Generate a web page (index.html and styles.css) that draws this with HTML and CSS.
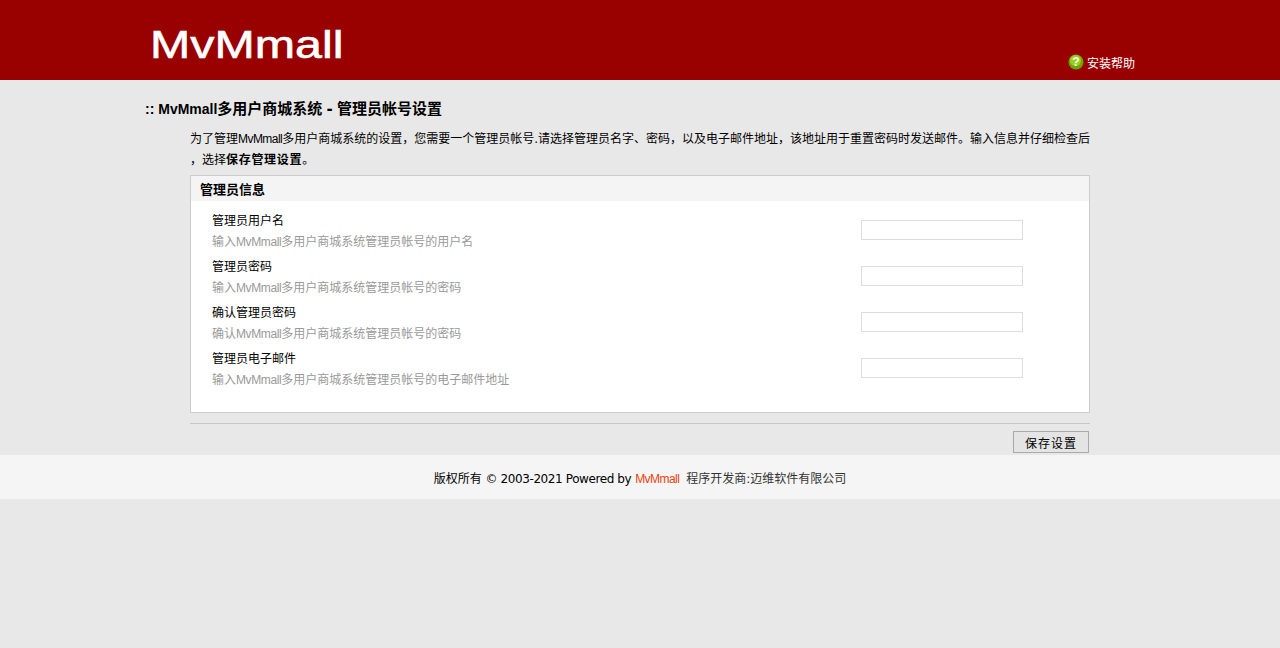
FILE: index.html
```html
<!DOCTYPE html>
<html lang="zh-CN">
<head>
  <meta charset="UTF-8">
  <meta name="viewport" content="width=device-width, initial-scale=1.0">
  <title>MvMmall 安装</title>
  <link rel="stylesheet" href="styles.css">
</head>
<body>
  <header class="top">
    <div class="logo">MvMmall</div>
    <a class="help" href="#">
      <svg class="help-icon" width="16" height="16" viewBox="0 0 16 16">
        <circle cx="8" cy="8" r="7.5" fill="#6aa800"/>
        <circle cx="7.5" cy="6.5" r="5.5" fill="#9ccf1a"/>
        <text class="help-mark" x="8" y="12">?</text>
      </svg>
      <span>安装帮助</span>
    </a>
  </header>

  <h1 class="page-title"><span class="title-latin">:: MvMmall</span>多用户商城系统 - 管理员帐号设置</h1>

  <main class="content">
    <p class="intro">为了管理<span class="narrow">MvMmall</span>多用户商城系统的设置，您需要一个管理员帐号.请选择管理员名字、密码，以及电子邮件地址，该地址用于重置密码时发送邮件。输入信息并仔细检查后<br>，选择<b class="strong">保存管理设置</b>。</p>

    <section class="panel">
      <h2 class="panel-title">管理员信息</h2>
      <div class="rows">
        <div class="row">
          <div class="row-text">
            <div class="row-label">管理员用户名</div>
            <div class="row-hint">输入<span class="narrow">MvMmall</span>多用户商城系统管理员帐号的用户名</div>
          </div>
          <input class="field" type="text">
        </div>
        <div class="row">
          <div class="row-text">
            <div class="row-label">管理员密码</div>
            <div class="row-hint">输入<span class="narrow">MvMmall</span>多用户商城系统管理员帐号的密码</div>
          </div>
          <input class="field" type="password">
        </div>
        <div class="row">
          <div class="row-text">
            <div class="row-label">确认管理员密码</div>
            <div class="row-hint">确认<span class="narrow">MvMmall</span>多用户商城系统管理员帐号的密码</div>
          </div>
          <input class="field" type="password">
        </div>
        <div class="row">
          <div class="row-text">
            <div class="row-label">管理员电子邮件</div>
            <div class="row-hint">输入<span class="narrow">MvMmall</span>多用户商城系统管理员帐号的电子邮件地址</div>
          </div>
          <input class="field" type="text">
        </div>
      </div>
    </section>

    <div class="actions">
      <button class="btn" type="button">保存设置</button>
    </div>
  </main>

  <footer class="bottom">
    <span>版权所有 <span class="copy">© 2003-2021 Powered by</span> <a class="brand narrow" href="#">MvMmall</a></span>
    <span class="vendor">程序开发商:迈维软件有限公司</span>
  </footer>
</body>
</html>
```

FILE: styles.css
```css
body { margin: 0; background: #e8e8e8; color: #000; font-family: "DejaVu Sans", "Noto Sans CJK SC", sans-serif; font-size: 12px; }
a { text-decoration: none; }

.top { height: 80px; background: #990000; display: flex; justify-content: space-between; padding: 0 145px 0 150px; box-sizing: border-box; }
.logo { color: #fff; font-family: "Liberation Sans", sans-serif; font-size: 39px; line-height: 30px; height: 30px; margin-top: 30px; transform: scaleX(1.24); transform-origin: left top; -webkit-text-stroke: 0.6px #fff; }
.help { color: #fff; display: flex; align-items: center; gap: 3px; align-self: flex-end; margin-bottom: 9px; height: 18px; }
.help-icon { display: block; }
.help-mark { fill: #fff; font-family: "Liberation Sans", sans-serif; font-size: 12px; font-weight: bold; text-anchor: middle; }

.page-title { margin: 20px 0 0 145px; font-size: 15px; line-height: 18px; font-weight: bold; word-spacing: -1px; }
.title-latin { font-family: "Liberation Sans", sans-serif; font-size: 14px; word-spacing: 0; }

.content { width: 900px; margin: 0 0 0 190px; }
.narrow { font-family: "Liberation Sans", sans-serif; letter-spacing: -0.55px; }
.intro { margin: 11px 0 4px; line-height: 21px; white-space: nowrap; }
.strong { letter-spacing: 0.7px; }

.panel { background: #fff; border: 1px solid #cccccc; height: 236px; }
.panel-title { margin: 0; padding-left: 9px; height: 25px; line-height: 27px; background: #f4f4f4; font-size: 13px; font-weight: bold; }
.rows { padding: 8px 21px 0; }
.row { height: 46px; display: flex; justify-content: space-between; align-items: center; padding-right: 45px; }
.row-label { line-height: 21px; }
.row-hint { line-height: 21px; color: #999; }
.row-hint .narrow { letter-spacing: -0.4px; }
.field { width: 162px; height: 20px; box-sizing: border-box; border: 1px solid #dddddd; background: #fff; padding: 0; margin: 0 0 4px; }

.actions { margin-top: 10px; border-top: 1px solid #c8c8c8; padding: 7px 1px 0 0; display: flex; justify-content: flex-end; }
.btn { width: 76px; height: 22px; padding: 0; border: 1px solid #aaa; background: #e4e4e4; color: #000; font-family: "Noto Sans CJK SC", sans-serif; font-size: 12px; letter-spacing: 1px; }

.bottom { margin-top: 2px; height: 44px; background: #f5f5f5; display: flex; justify-content: center; align-items: center; gap: 7px; }
.copy { letter-spacing: -0.4px; }
.brand { color: #e8430f; }
.vendor { color: #333; }
```
